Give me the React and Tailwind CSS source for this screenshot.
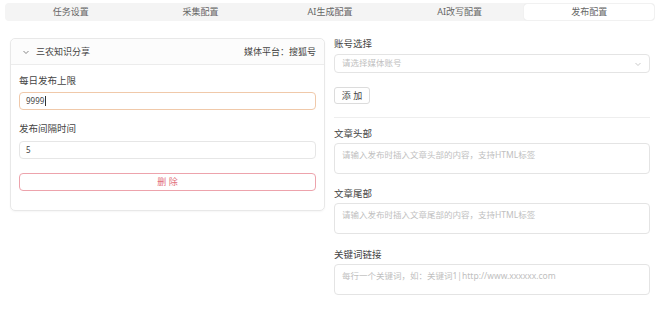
import React from "react";

const tabs = ["任务设置", "采集配置", "AI生成配置", "AI改写配置", "发布配置"];

const Field = ({ label, placeholder, className = "" }) => (
  <div className={className}>
    <div className="h-[14px] leading-[14px] text-[9.5px] text-[#444]">{label}</div>
    <div className="mt-[2px] h-[31px] border border-[#e4e4e4] rounded-[4px] px-[7px] pt-[5px] text-[8.5px] leading-[12px] text-[#c0c0c0]">
      {placeholder}
    </div>
  </div>
);

const App = () => {
  return (
    <div
      className="w-[660px] h-[310px] bg-white overflow-hidden"
      style={{ fontFamily: '"Noto Sans", "Noto Sans CJK SC", sans-serif' }}
    >
      <div className="px-[5px] pt-[3px]">
        <div className="flex h-[18px] bg-[#f4f4f4] rounded-[4px] p-[1px]">
          {tabs.map((t, i) => (
            <div
              key={t}
              className={`flex-1 flex items-center justify-center text-[9px] text-[#666] rounded-[3px] ${
                i === 4 ? "bg-white shadow-[0_0_1px_rgba(0,0,0,0.15)] text-[#444]" : ""
              }`}
            >
              {t}
            </div>
          ))}
        </div>
      </div>

      <div className="grid grid-cols-[315px_316px] gap-[9px] px-[10px] mt-[17px]">
        {/* left card */}
        <div className="self-start border border-[#e8e8e8] rounded-[5px] shadow-[0_1px_2px_rgba(0,0,0,0.04)]">
          <div className="h-[26px] flex items-center justify-between px-[9px] bg-[#fcfcfc] border-b border-[#ececec] rounded-t-[5px] text-[9px] text-[#444]">
            <div className="flex items-center gap-[6px]">
              <svg width="8" height="8" viewBox="0 0 8 8" className="ml-[2px]">
                <path d="M1.5 3l2.5 2.5L6.5 3" fill="none" stroke="#777" strokeWidth="0.9" />
              </svg>
              <span>三农知识分享</span>
            </div>
            <span className="mr-[-1px]">媒体平台：搜狐号</span>
          </div>
          <div className="px-[8px] pt-[9px] pb-[19px]">
            <div className="h-[14px] leading-[14px] text-[9.5px] text-[#444]">每日发布上限</div>
            <div className="mt-[4px] h-[18px] border border-[#f0c9aa] rounded-[4px] px-[6px] flex items-center text-[8px] text-[#444]">
              9999<span className="ml-[1px] w-px h-[10px] bg-[#333]" />
            </div>
            <div className="mt-[12px] h-[14px] leading-[14px] text-[9.5px] text-[#444]">发布间隔时间</div>
            <div className="mt-[5px] h-[18px] border border-[#e6e6e6] rounded-[4px] px-[6px] flex items-center text-[8px] text-[#444]">
              5
            </div>
            <div className="mt-[14px] h-[18px] border border-[#eda3ac] rounded-[4px] flex items-center justify-center text-[9px] text-[#e2707c]">
              删 除
            </div>
          </div>
        </div>

        {/* right column */}
        <div className="flex flex-col">
          <div className="h-[14px] leading-[14px] text-[9.5px] text-[#444] mt-[-1px]">账号选择</div>
          <div className="mt-[3px] h-[19px] border border-[#e4e4e4] rounded-[4px] px-[7px] flex items-center justify-between text-[8.5px] text-[#c0c0c0]">
            <span>请选择媒体账号</span>
            <svg width="8" height="8" viewBox="0 0 8 8">
              <path d="M1.5 3l2.5 2.5L6.5 3" fill="none" stroke="#bbb" strokeWidth="0.8" />
            </svg>
          </div>
          <div className="mt-[14px] w-[36px] h-[17px] border border-[#dcdcdc] rounded-[3px] flex items-center justify-center text-[9px] text-[#444]">
            添 加
          </div>
          <div className="mt-[13px] h-px bg-[#eeeeee]" />
          <Field label="文章头部" placeholder="请输入发布时插入文章头部的内容，支持HTML标签" className="mt-[9px]" />
          <Field label="文章尾部" placeholder="请输入发布时插入文章尾部的内容，支持HTML标签" className="mt-[13px]" />
          <Field label="关键词链接" placeholder="每行一个关键词，如：关键词1|http://www.xxxxxx.com" className="mt-[14px]" />
        </div>
      </div>
    </div>
  );
};

export default App;
